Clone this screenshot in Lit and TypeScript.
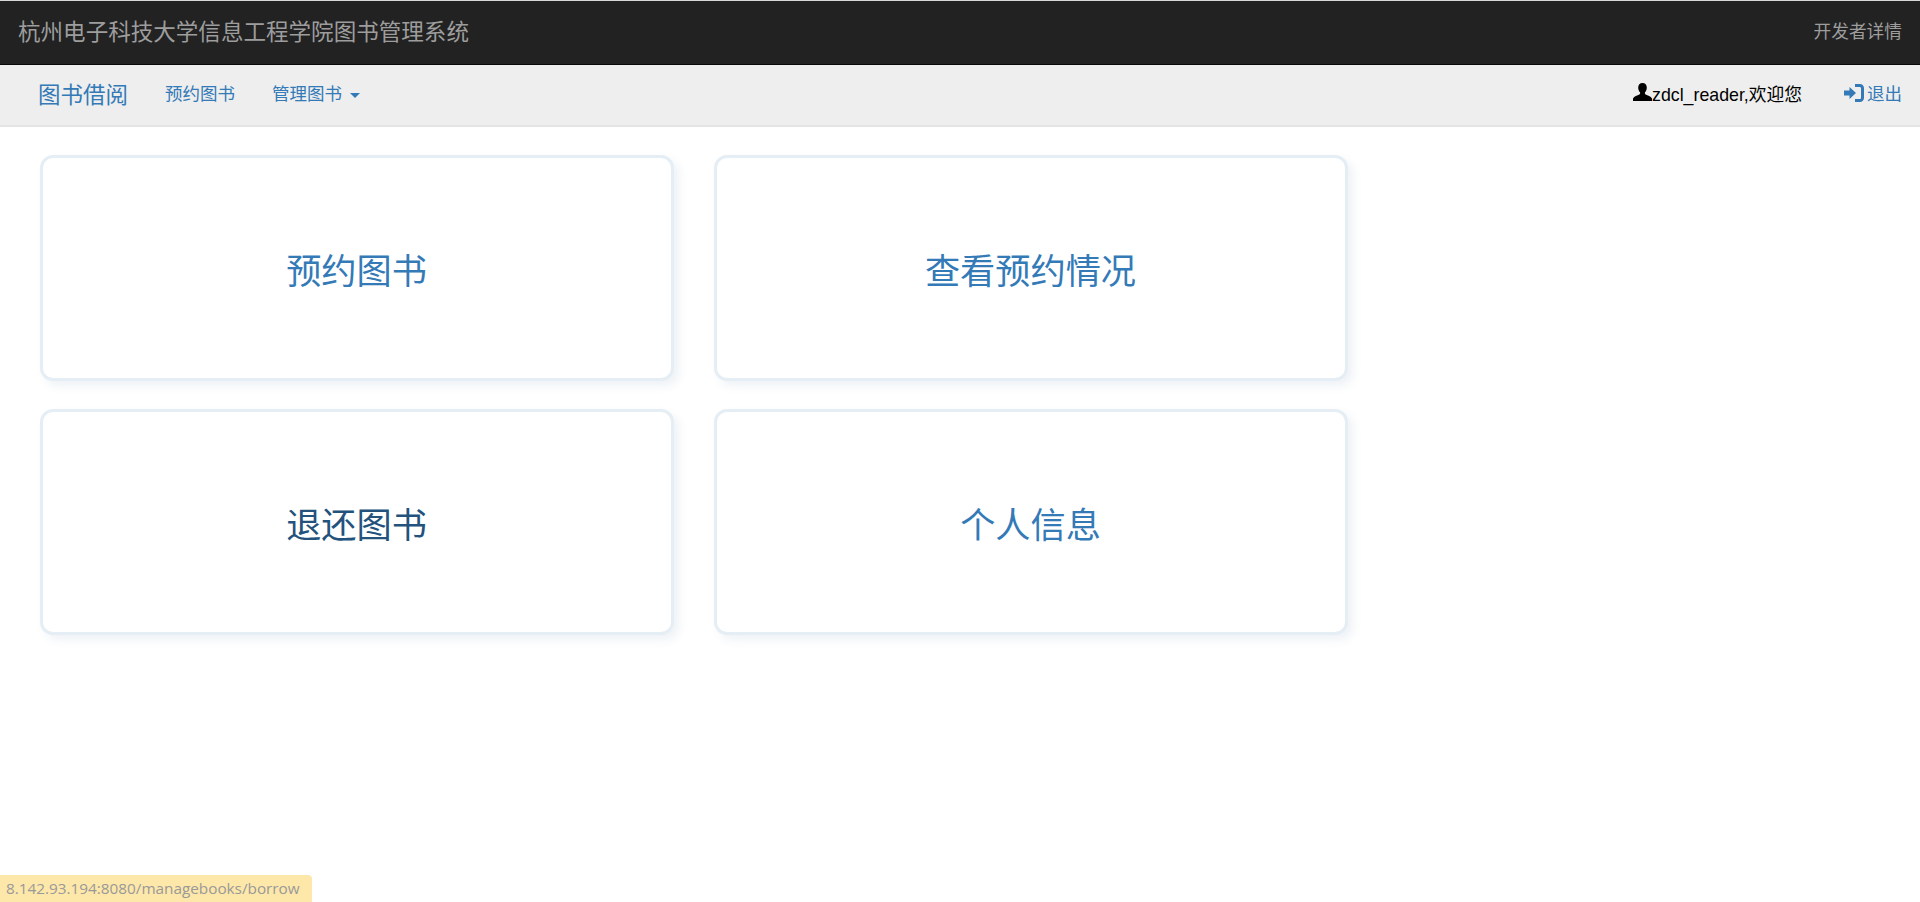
import { LitElement, html, css } from "lit";
import { customElement } from "lit/decorators.js";

@customElement("app-root")
export class AppRoot extends LitElement {
  static styles = css`
    :host {
      display: block;
      position: relative;
      height: 902px;
      overflow: hidden;
      background: #fff;
      font-family: "Liberation Sans", "Noto Sans CJK SC", sans-serif;
      font-size: 17.5px;
      color: #333;
    }
    .top {
      box-sizing: border-box;
      height: 65px;
      background: #222;
      border-top: 1px solid #d8d8d8;
      border-bottom: 1px solid #080808;
      display: flex;
      align-items: center;
      justify-content: space-between;
      padding: 0 18px 5px 18px;
      color: #9d9d9d;
    }
    .brand { font-size: 22.55px; }
    .dev { font-size: 17.7px; }
    .nav {
      box-sizing: border-box;
      height: 62px;
      background: #eee;
      border-bottom: 2px solid #e4e4e4;
      display: flex;
      align-items: center;
      padding: 0 18px 5px 38px;
      color: #337ab7;
    }
    .nav-brand { font-size: 22.5px; margin-right: 37px; }
    .link { margin-right: 37px; }
    .caret {
      display: inline-block;
      width: 0;
      height: 0;
      margin-left: 8px;
      vertical-align: middle;
      border-top: 5px solid #337ab7;
      border-left: 5px solid transparent;
      border-right: 5px solid transparent;
    }
    .spacer { flex: 1; }
    .user {
      color: #000;
      display: flex;
      align-items: center;
      margin-right: 42px;
      font-size: 17.75px;
    }
    .logout { display: flex; align-items: center; gap: 3px; }
    svg { display: block; fill: currentColor; }
    .grid {
      display: grid;
      grid-template-columns: repeat(2, 634px);
      grid-auto-rows: 226px;
      column-gap: 40px;
      row-gap: 28px;
      padding: 28px 0 0 40px;
    }
    .card {
      box-sizing: border-box;
      border: 3px solid #e5edf5;
      border-radius: 13px;
      box-shadow: 5px 5px 10px rgba(40, 90, 140, 0.08);
      display: flex;
      align-items: center;
      justify-content: center;
      padding-right: 1px;
      font-size: 35.2px;
      color: #337ab7;
      background: #fff;
    }
    .card.hover { color: #23527c; }
    .status {
      position: absolute;
      left: 0;
      bottom: 0;
      height: 27px;
      width: 312px;
      box-sizing: border-box;
      padding-left: 6px;
      background: #fde7a9;
      border-top-right-radius: 4px;
      color: #999;
      font: 15.3px/27px "Open Sans", sans-serif;
      white-space: nowrap;
    }
  `;

  render() {
    return html`
      <div class="top">
        <span class="brand">杭州电子科技大学信息工程学院图书管理系统</span>
        <span class="dev">开发者详情</span>
      </div>
      <div class="nav">
        <span class="nav-brand">图书借阅</span>
        <span class="link">预约图书</span>
        <span class="link">管理图书<span class="caret"></span></span>
        <span class="spacer"></span>
        <span class="user">
          <svg width="19" height="19" viewBox="0 0 19 19"><path d="M9.500 0c2.700 0 4.300 2 4.300 4.800 0 1.800-.7 3.500-1.800 4.500-.3 1-.1 1.700.6 2.100 2 1 5.300 1.600 6.400 4.100V18H0v-2.500c1.100-2.500 4.400-3.100 6.400-4.100.7-.4.9-1.100.6-2.100-1.100-1-1.800-2.700-1.800-4.500C5.200 2 6.800 0 9.500 0z"/></svg>
          <span>zdcl_reader,欢迎您</span>
        </span>
        <span class="logout">
          <svg width="20" height="18" viewBox="0 0 20 18"><path d="M0 6.500h5.500V3L12 9l-6.500 6v-3.500H0zM11 0h5c2.300 0 4 1.700 4 4v10c0 2.300-1.700 4-4 4h-5v-3h4.500c1 0 1.500-.5 1.500-1.500v-9c0-1-.5-1.500-1.500-1.500H11z"/></svg>
          <span>退出</span>
        </span>
      </div>
      <div class="grid">
        <div class="card">预约图书</div>
        <div class="card">查看预约情况</div>
        <div class="card hover">退还图书</div>
        <div class="card">个人信息</div>
      </div>
      <div class="status">8.142.93.194:8080/managebooks/borrow</div>
    `;
  }
}
